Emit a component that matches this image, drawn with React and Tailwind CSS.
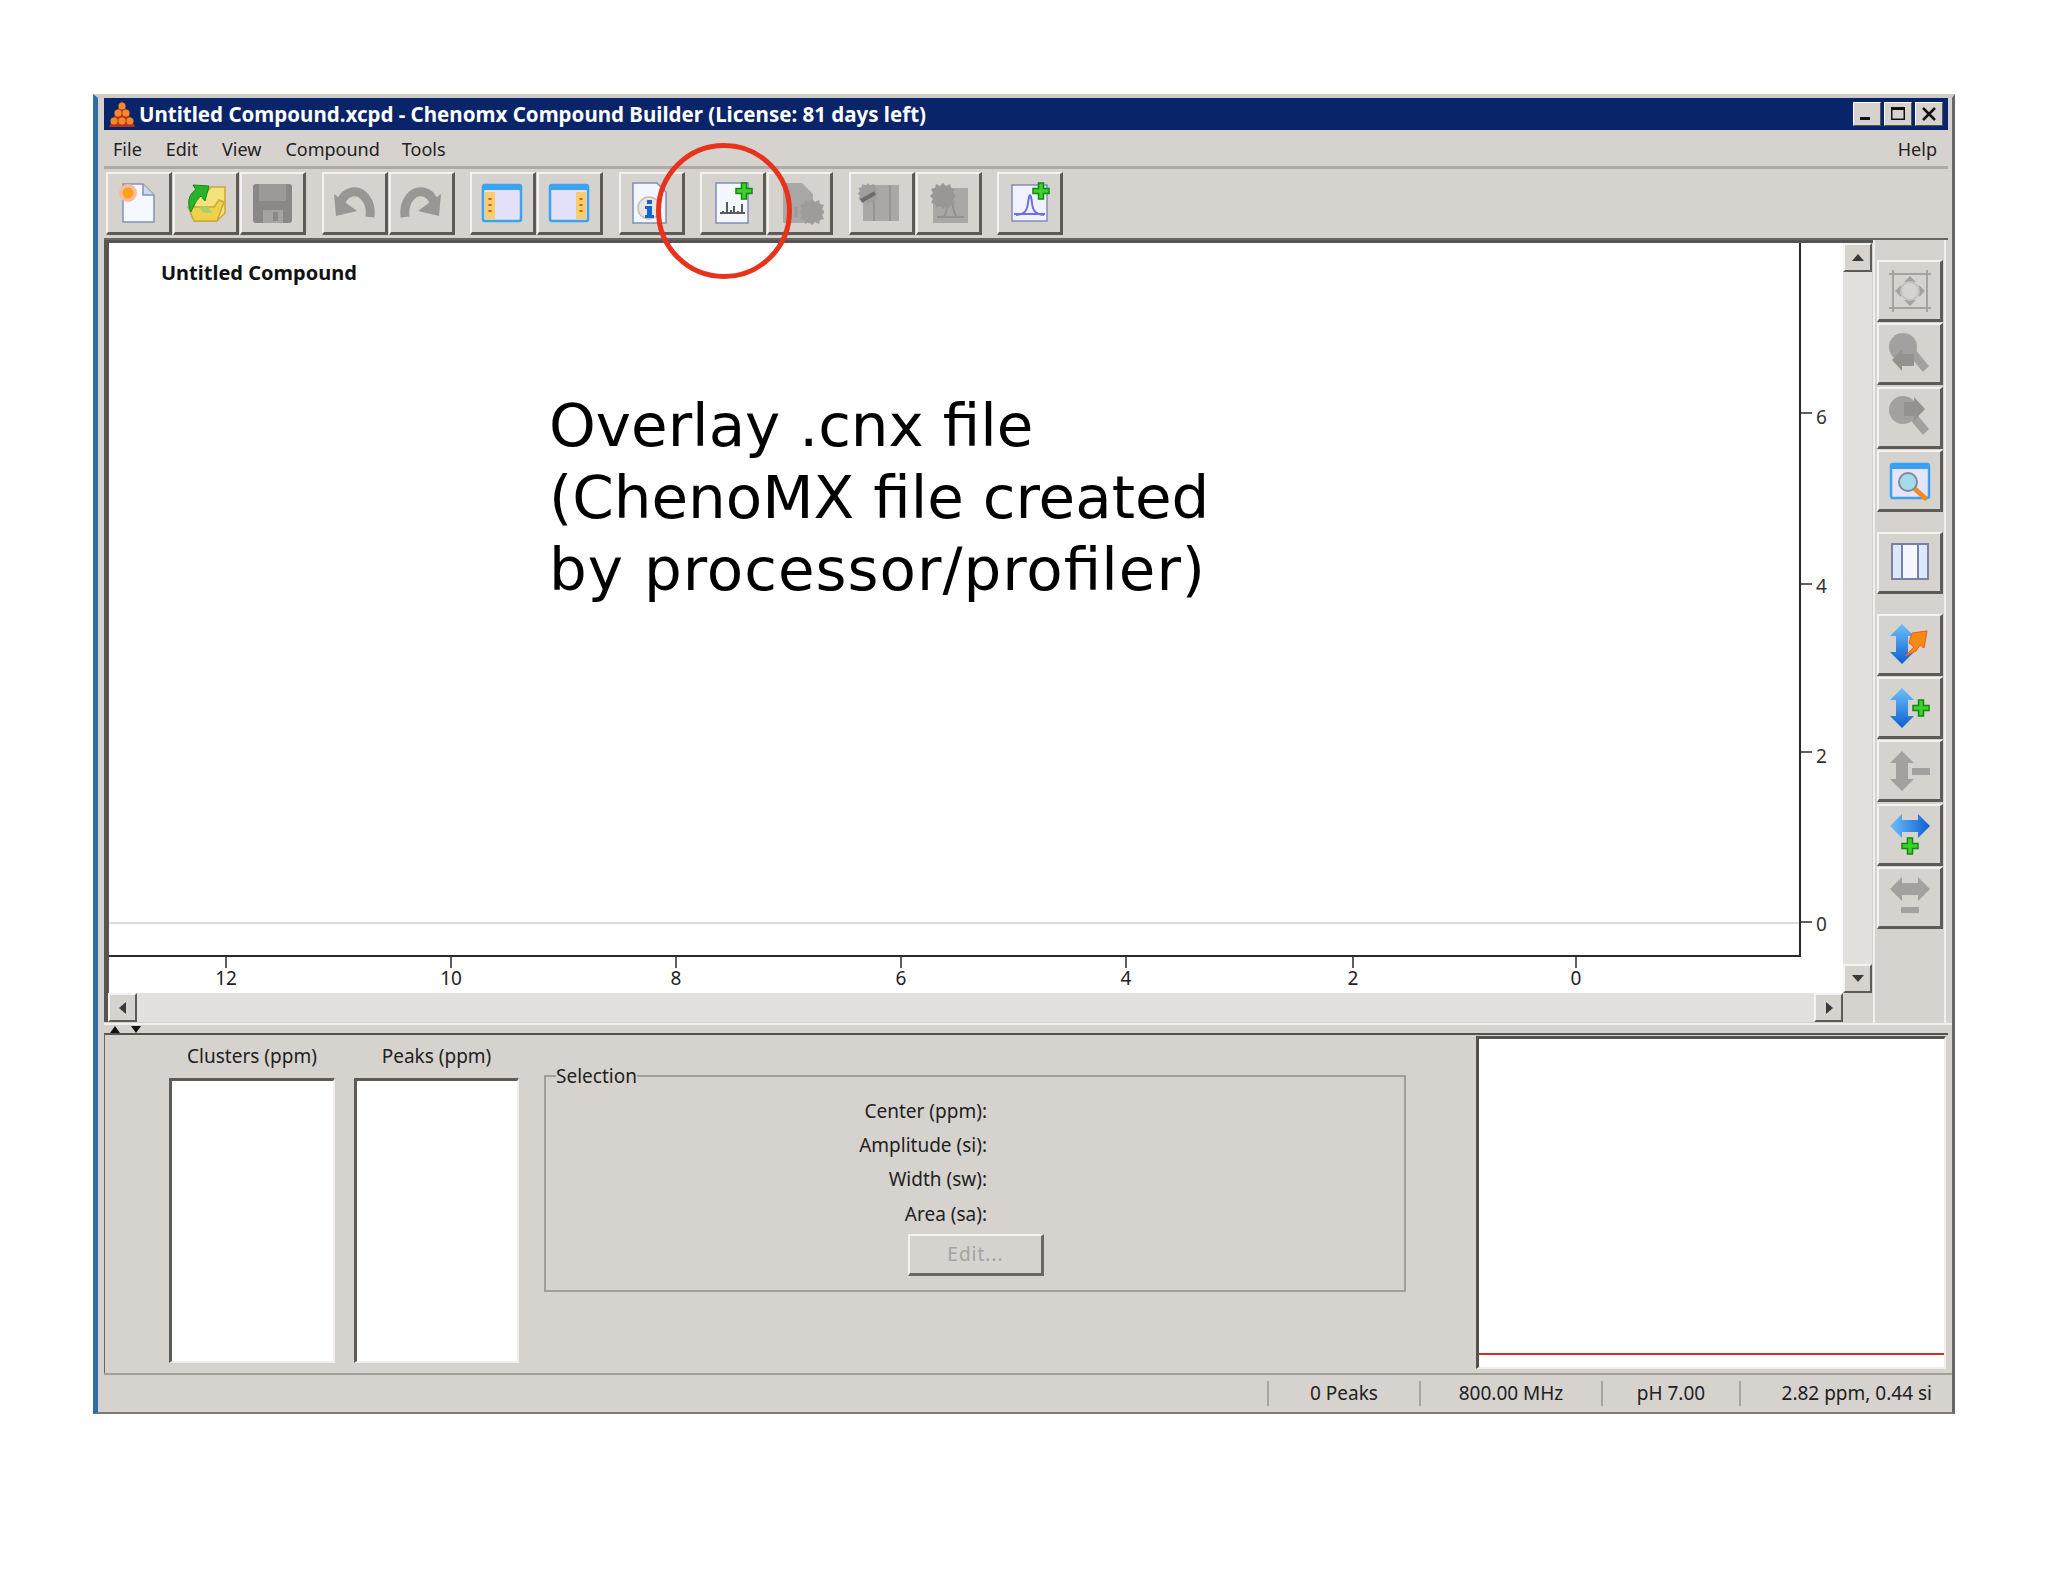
import React from 'react';

const Plus = ({ x, y }) => (
  <path
    d={`M${x - 2.5} ${y - 8}h5v5.5h5.5v5h-5.5v5.5h-5v-5.5h-5.5v-5h5.5z`}
    fill="#3fd02c"
    stroke="#0f8a12"
    strokeWidth="1.5"
  />
);

const Icon = ({ children }) => (
  <svg width="48" height="48" viewBox="0 0 48 48" className="block">
    {children}
  </svg>
);

const blob = 'M0 -11l3 3 4 -2 1 4 4 1 -2 4 3 3 -3 3 2 4 -4 1 -1 4 -4 -2 -3 3 -3 -3 -4 2 -1 -4 -4 -1 2 -4 -3 -3 3 -3 -2 -4 4 -1 1 -4 4 2z';

const icons = {
  newDoc: (
    <Icon>
      <path d="M8 5h20l11 11v27H8z" fill="#f6f8ff" stroke="#8393b8" strokeWidth="1.5" />
      <path d="M28 5v11h11" fill="#cdd8ee" stroke="#8393b8" strokeWidth="1.5" />
      <circle cx="13" cy="14" r="9" fill="#fbb9a0" />
      <circle cx="13" cy="14" r="5.5" fill="#f9a31a" />
    </Icon>
  ),
  open: (
    <Icon>
      <path d="M12 12h14l3 -4h14v26l-8 8H13z" fill="#f6e27a" stroke="#c8a83a" strokeWidth="1.5" />
      <path d="M6 28h26l5 -7 5 2-7 19H12z" fill="#efd24a" stroke="#c8a83a" strokeWidth="1.5" />
      <path d="M9 33C5 25 6 15 14 11l-3 -5 16 1-4 15-4 -5c-4 3 -7 9 -10 16z" fill="#29b32c" stroke="#118a1a" strokeWidth="1" />
      <path d="M17 28h10l3 6H21z" fill="#a9d26a" />
    </Icon>
  ),
  save: (
    <Icon>
      <rect x="4" y="5" width="39" height="39" rx="3" fill="#8a8886" />
      <rect x="10" y="5" width="27" height="17" fill="#9c9a98" />
      <rect x="14" y="31" width="20" height="13" fill="#a5a3a1" />
      <rect x="24" y="33" width="5" height="9" fill="#8a8886" />
    </Icon>
  ),
  undo: (
    <Icon>
      <path d="M40 38C42 22 32 11 22 13 16 14 13 18 11 23" fill="none" stroke="#999795" strokeWidth="9" />
      <polygon points="4,15 6,37 27,32" fill="#999795" />
    </Icon>
  ),
  redo: (
    <Icon>
      <path d="M8 38C6 22 16 11 26 13 32 14 35 18 37 23" fill="none" stroke="#999795" strokeWidth="9" />
      <polygon points="44,15 42,37 21,32" fill="#999795" />
    </Icon>
  ),
  layoutLeft: (
    <Icon>
      <rect x="4" y="6" width="38" height="36" rx="2" fill="#e4e2fb" stroke="#3ba3f2" strokeWidth="2.5" />
      <rect x="4" y="6" width="38" height="5" fill="#3ba3f2" />
      <rect x="6" y="13" width="10" height="27" fill="#f6cf6a" />
      <path d="M11 19v2M11 25v2M11 31v2" stroke="#e2502a" strokeWidth="3" />
    </Icon>
  ),
  layoutRight: (
    <Icon>
      <rect x="4" y="6" width="38" height="36" rx="2" fill="#e4e2fb" stroke="#3ba3f2" strokeWidth="2.5" />
      <rect x="4" y="6" width="38" height="5" fill="#3ba3f2" />
      <rect x="30" y="13" width="10" height="27" fill="#f6cf6a" />
      <path d="M35 19v2M35 25v2M35 31v2" stroke="#e2502a" strokeWidth="3" />
    </Icon>
  ),
  info: (
    <Icon>
      <path d="M6 4h24l9 9v31H6z" fill="#f3f6ff" stroke="#7e8fb8" strokeWidth="1.5" />
      <circle cx="22" cy="29" r="11" fill="#e8e4e0" stroke="#c6bfb8" strokeWidth="1.5" />
      <rect x="20" y="21" width="5" height="4" fill="#1463d8" />
      <path d="M18 27h7v9h2v3H18v-3h2v-6h-2z" fill="#1463d8" />
    </Icon>
  ),
  addSpectrum: (
    <Icon>
      <rect x="7" y="4" width="32" height="40" fill="#f5f7ff" stroke="#7e8fb8" strokeWidth="1.5" />
      <path d="M11 34h25M14 34v-2M18 34v-11M22 34v-3M25 34v-7M29 34v-2M33 34v-9" stroke="#5a5a5a" strokeWidth="2" fill="none" />
      <Plus x={35} y={12} />
    </Icon>
  ),
  removeSpectrum: (
    <Icon>
      <path d="M7 4h19l11 11v29H7z" fill="#aaa8a6" />
      <g transform="translate(36 31)">
        <path d={blob} fill="#9e9c9a" />
      </g>
      <path d="M13 38V24M20 38V28" stroke="#9a9896" strokeWidth="3" />
    </Icon>
  ),
  splitCluster: (
    <Icon>
      <rect x="6" y="6" width="36" height="36" fill="#aaa8a6" />
      <path d="M17 6v36M33 6v36" stroke="#969492" strokeWidth="2" />
      <g transform="translate(11 13) scale(.8)">
        <path d={blob} fill="#a09e9c" />
      </g>
      <path d="M4 22l14 -8" stroke="#6e6c6a" strokeWidth="4" />
    </Icon>
  ),
  peakCluster: (
    <Icon>
      <rect x="9" y="9" width="35" height="35" fill="#aaa8a6" />
      <path d="M13 38h27M19 38c5 -1 5 -24 7 -24s2 23 8 24" stroke="#949290" strokeWidth="2" fill="none" />
      <g transform="translate(19 15)">
        <path d={blob} fill="#999795" />
      </g>
    </Icon>
  ),
  addPeak: (
    <Icon>
      <rect x="6" y="6" width="35" height="36" fill="#f0f3ff" stroke="#7e8fb8" strokeWidth="1.5" />
      <path d="M8 35h31M10 36c9 -1 11 -4 12 -12 .5 -5 1.500 -8 2 -8s1.500 3 2 8c1 8 3 11 12 12" stroke="#6f6cf0" strokeWidth="2" fill="none" />
      <Plus x={35} y={12} />
    </Icon>
  ),
  fit: (
    <Icon>
      <path d="M3 7h42M3 41h42M7 3v42M41 3v42" stroke="#a5a3a1" strokeWidth="2" />
      <path d="M18 15l6 -6 6 6zM18 33l6 6 6 -6zM15 18l-6 6 6 6zM33 18l6 6-6 6z" fill="#a5a3a1" />
      <circle cx="24" cy="24" r="9" fill="none" stroke="#c2c0be" strokeWidth="2" />
    </Icon>
  ),
  zoomBack: (
    <Icon>
      <circle cx="17" cy="17" r="14" fill="#a3a19f" />
      <path d="M22 24l6 -6 15 18-6 6z" fill="#a3a19f" />
      <path d="M6 30l10 -11v5h12v12H16v5z" fill="#949290" />
    </Icon>
  ),
  zoomForward: (
    <Icon>
      <circle cx="17" cy="17" r="14" fill="#a3a19f" />
      <path d="M22 24l6 -6 15 18-6 6z" fill="#a3a19f" />
      <path d="M39 16L28 4v5H18v14h10v5z" fill="#949290" />
    </Icon>
  ),
  zoomWindow: (
    <Icon>
      <rect x="5" y="8" width="38" height="34" rx="2" fill="#e6e4fb" stroke="#37a2f5" strokeWidth="2.5" />
      <rect x="5" y="8" width="38" height="5" fill="#37a2f5" />
      <path d="M29 33l10 9" stroke="#f08a24" strokeWidth="5" strokeLinecap="round" />
      <circle cx="22" cy="26" r="9" fill="#a6dcea" stroke="#7c8c98" strokeWidth="2" />
    </Icon>
  ),
  columns: (
    <Icon>
      <rect x="6" y="6" width="36" height="35" fill="#f4f7fe" stroke="#7a80a4" strokeWidth="2" />
      <rect x="7" y="7" width="8" height="33" fill="#dbe9fb" />
      <rect x="33" y="7" width="8" height="33" fill="#dbe9fb" />
      <path d="M16 6v35M32 6v35" stroke="#7a80a4" strokeWidth="2" />
    </Icon>
  ),
  vAuto: (
    <Icon>
      <defs>
        <linearGradient id="vBlue1" x1="0" y1="0" x2="0" y2="1">
          <stop offset="0" stopColor="#6cc0fa" />
          <stop offset="1" stopColor="#0d5fd2" />
        </linearGradient>
      </defs>
      <path d="M16 4l12 12h-6v16h6L16 44 4 32h6V16H4z" fill="url(#vBlue1)" />
      <path d="M26 13l15 -2-3 17-4 -3-4 6-11 5 9 -9-5 -4z" fill="#f78a17" stroke="#f45a1c" strokeWidth="1" />
    </Icon>
  ),
  vPlus: (
    <Icon>
      <defs>
        <linearGradient id="vBlue2" x1="0" y1="0" x2="0" y2="1">
          <stop offset="0" stopColor="#6cc0fa" />
          <stop offset="1" stopColor="#0d5fd2" />
        </linearGradient>
      </defs>
      <path d="M16 4l12 12h-6v16h6L16 44 4 32h6V16H4z" fill="url(#vBlue2)" />
      <Plus x={35} y={24} />
    </Icon>
  ),
  vMinus: (
    <Icon>
      <path d="M16 4l12 12h-6v16h6L16 44 4 32h6V16H4z" fill="#a3a19f" />
      <rect x="26" y="21" width="18" height="7" fill="#a3a19f" />
    </Icon>
  ),
  hPlus: (
    <Icon>
      <defs>
        <linearGradient id="hBlue" x1="0" y1="0" x2="1" y2="0">
          <stop offset="0" stopColor="#6cc0fa" />
          <stop offset="1" stopColor="#0d5fd2" />
        </linearGradient>
      </defs>
      <path d="M4 16L16 4v6h16V4l12 12-12 12v-6H16v6z" fill="url(#hBlue)" />
      <Plus x={24} y={36} />
    </Icon>
  ),
  hMinus: (
    <Icon>
      <path d="M4 16L16 4v6h16V4l12 12-12 12v-6H16v6z" fill="#a3a19f" />
      <rect x="15" y="34" width="18" height="6" fill="#a3a19f" />
    </Icon>
  ),
};

const ToolButton = ({ icon, h = 'h-[62px]' }) => (
  <div className={`w-[66px] ${h} flex items-center justify-center bg-[#d6d2ce] border-t-2 border-l-2 border-t-[#f4f3f1] border-l-[#f4f3f1] border-r-[3px] border-b-[3px] border-r-[#5e5a56] border-b-[#5e5a56]`}>
    {icons[icon]}
  </div>
);

const ScrollButton = ({ dir }) => {
  const points = { up: '4,13 16,13 10,6', down: '4,6 16,6 10,13', left: '13,4 13,16 6,10', right: '7,4 7,16 14,10' };
  return (
    <div className="w-[29px] h-[29px] shrink-0 flex items-center justify-center bg-[#d6d2ce] border-t-2 border-l-2 border-t-[#f4f3f1] border-l-[#f4f3f1] border-r-2 border-b-2 border-r-[#5e5a56] border-b-[#5e5a56]">
      <svg width="20" height="20" viewBox="0 0 20 20">
        <polygon points={points[dir]} fill="#3c3a38" />
      </svg>
    </div>
  );
};

const toolbarGroups = [
  ['newDoc', 'open', 'save'],
  ['undo', 'redo'],
  ['layoutLeft', 'layoutRight'],
  ['info'],
  ['addSpectrum', 'removeSpectrum'],
  ['splitCluster', 'peakCluster'],
  ['addPeak'],
];

const sideGroups = [
  ['fit', 'zoomBack', 'zoomForward', 'zoomWindow'],
  ['columns'],
  ['vAuto', 'vPlus', 'vMinus', 'hPlus', 'hMinus'],
];

const xTicks = [
  [118, '12'],
  [343, '10'],
  [568, '8'],
  [793, '6'],
  [1018, '4'],
  [1245, '2'],
  [1468, '0'],
];

const yTicks = [
  [170, '6', 11],
  [341, '4', 9],
  [509, '2', 11],
  [679, '0', 9],
];

const Chart = () => (
  <svg width="1734" height="750" viewBox="1 0 1734 750" className="block" fontFamily="'Noto Sans', sans-serif">
    <text x="53" y="37" fontSize="20" fontWeight="700" fill="#111">Untitled Compound</text>
    <line x1="0" x2="1692" y1="680" y2="680" stroke="#cfcfcf" strokeWidth="1.5" />
    <path d="M1692 0V713H0" fill="none" stroke="#2a2a2a" strokeWidth="2" />
    {xTicks.map(([x, label]) => (
      <g key={label}>
        <line x1={x} x2={x} y1="713" y2="725" stroke="#2a2a2a" strokeWidth="1.5" />
        <text x={x} y="742" fontSize="19" textAnchor="middle" fill="#222">{label}</text>
      </g>
    ))}
    {yTicks.map(([y, label, dy]) => (
      <g key={label}>
        <line x1="1692" x2="1704" y1={y} y2={y} stroke="#2a2a2a" strokeWidth="1.5" />
        <text x="1708" y={y + dy} fontSize="19" fill="#333">{label}</text>
      </g>
    ))}
  </svg>
);

const List = ({ title, width }) => (
  <div className={`${width} flex flex-col`}>
    <div className="h-[43px] flex items-center justify-center text-[19px] text-[#222]">{title}</div>
    <div className="h-[285px] bg-white border-t-[3px] border-l-[3px] border-t-[#5e5a56] border-l-[#5e5a56] border-r-2 border-b-2 border-r-[#efeeec] border-b-[#efeeec]" />
  </div>
);

const selectionRows = ['Center (ppm):', 'Amplitude (si):', 'Width (sw):', 'Area (sa):'];

const statusCells = [
  ['w-[152px]', 'justify-center', '0 Peaks'],
  ['w-[182px]', 'justify-center', '800.00 MHz'],
  ['w-[138px]', 'justify-center', 'pH 7.00'],
  ['w-[213px]', 'justify-end pr-[20px]', '2.82 ppm, 0.44 si'],
];

export default function App() {
  return (
    <div className="relative w-[2048px] h-[1582px] bg-white pt-[94px] pl-[93px] font-['Noto_Sans',sans-serif]">
      <div className="w-[1862px] h-[1320px] flex flex-col bg-[#d6d2ce] border-l-[5px] border-l-[#2f6ea5] border-t-4 border-t-[#cfccc8] border-r-[3px] border-r-[#6a6662] border-b-2 border-b-[#7c7874]">
        {/* title bar */}
        <div className="ml-[6px] mr-[4px] h-[32px] shrink-0 bg-[#0a246a] flex items-center pl-[4px] pr-[5px] text-white">
          <svg width="28" height="28" viewBox="0 0 28 28" className="shrink-0">
            <path d="M14 1L27 27H1z" fill="#b8341c" />
            {[[14, 6], [10, 13], [18, 13], [6, 21], [14, 21], [22, 21]].map(([cx, cy]) => (
              <circle key={`${cx}-${cy}`} cx={cx} cy={cy} r="3.6" fill="#f58a2a" />
            ))}
          </svg>
          <span className="ml-[3px] text-[20.500px] font-bold whitespace-nowrap">Untitled Compound.xcpd - Chenomx Compound Builder (License: 81 days left)</span>
          <div className="ml-auto flex items-center gap-[3px]">
            {['min', 'max', 'close'].map((b) => (
              <div key={b} className="w-[28px] h-[24px] flex items-center justify-center bg-[#d6d2ce] border-t border-l border-t-white border-l-white border-r border-b border-r-[#555] border-b-[#555]">
                <svg width="20" height="18" viewBox="0 0 20 18">
                  {b === 'min' && <rect x="3" y="12" width="10" height="3" fill="#111" />}
                  {b === 'max' && <path d="M3 2h14v13H3zM4.500 5v8.500h11V5z" fill="#111" fillRule="evenodd" />}
                  {b === 'close' && <path d="M4 3l12 12M16 3L4 15" stroke="#111" strokeWidth="2.5" />}
                </svg>
              </div>
            ))}
          </div>
        </div>

        {/* menu */}
        <div className="ml-[6px] mr-[4px] h-[39px] shrink-0 flex items-center justify-between border-b-[3px] border-b-[#aeaaa6] pt-[2px] pl-[9px] pr-[11px] text-[18px] text-[#222]">
          <div className="flex gap-[24px]">
            <span>File</span>
            <span>Edit</span>
            <span>View</span>
            <span>Compound</span>
            <span className="-ml-[2px]">Tools</span>
          </div>
          <span>Help</span>
        </div>

        {/* toolbar */}
        <div className="ml-[8px] h-[69px] shrink-0 pt-[3px] flex gap-[15.500px]">
          {toolbarGroups.map((group) => (
            <div key={group[0]} className="flex gap-px">
              {group.map((icon) => (
                <ToolButton key={icon} icon={icon} h="h-[63px]" />
              ))}
            </div>
          ))}
        </div>

        {/* spectrum */}
        <div className="ml-[6px] mr-[4px] h-[785px] shrink-0 flex border-t-[2px] border-t-[#6a6662]">
          <div className="w-[1769px] flex flex-col">
            <div className="flex h-[753px] border-t-[3px] border-l-[5px] border-t-[#555] border-l-[#555]">
              <div className="w-[1734px] h-[750px] bg-white">
                <Chart />
              </div>
              <div className="w-[29px] flex flex-col bg-[#e3e1de]">
                <ScrollButton dir="up" />
                <div className="flex-1" />
                <ScrollButton dir="down" />
              </div>
            </div>
            <div className="flex h-[29px] border-l-4 border-l-[#555]">
              <ScrollButton dir="left" />
              <div className="w-[1677px] bg-[#e3e1de]" />
              <ScrollButton dir="right" />
            </div>
          </div>
          <div className="w-[73px] flex flex-col items-start gap-[20px] pl-[2px] pt-[20px] border-l-2 border-l-[#f0efed] border-r-2 border-r-[#f0efed]">
            {sideGroups.map((group) => (
              <div key={group[0]} className="flex flex-col gap-[1.250px]">
                {group.map((icon) => (
                  <ToolButton key={icon} icon={icon} />
                ))}
              </div>
            ))}
          </div>
        </div>

        {/* splitter */}
        <div className="ml-[6px] h-[10px] shrink-0 flex gap-[11px] pl-[6px] items-end border-t-2 border-t-[#f0efed]">
          <svg width="10" height="7" viewBox="0 0 10 7"><polygon points="0,7 10,7 5,0" fill="#111" /></svg>
          <svg width="10" height="7" viewBox="0 0 10 7"><polygon points="0,0 10,0 5,7" fill="#111" /></svg>
        </div>

        {/* bottom panel */}
        <div className="ml-[6px] mr-[4px] h-[340px] shrink-0 flex border-t-2 border-t-[#55514d] border-l-[1px] border-l-[#6a6662] pl-[64px] pr-[2px]">
          <div className="flex gap-[19px]">
            <List title="Clusters (ppm)" width="w-[166px]" />
            <List title="Peaks (ppm)" width="w-[165px]" />
          </div>
          <fieldset className="ml-[25px] mt-[28px] w-[862px] h-[229px] border-2 border-[#a29e9a] px-[10px]">
            <legend className="h-[26px] leading-[26px] text-[19px] text-[#222]">Selection</legend>
            <div className="flex flex-col items-end w-[431px] pt-[5px]">
              {selectionRows.map((row) => (
                <div key={row} className="h-[34.300px] flex items-center text-[19px] text-[#222]">{row}</div>
              ))}
            </div>
            <div className="ml-[352px] mt-[3px] w-[136px] h-[42px] flex items-center justify-center border-t-2 border-l-2 border-t-[#f4f3f1] border-l-[#f4f3f1] border-r-[3px] border-b-[3px] border-r-[#6a6662] border-b-[#6a6662] text-[19px] tracking-[1px] text-[#a5a3a0]">
              Edit...
            </div>
          </fieldset>
          <div className="ml-auto mt-[1px] w-[470px] h-[333px] flex flex-col justify-end pb-[12px] bg-white border-t-[3px] border-l-[3px] border-t-[#55514d] border-l-[#55514d] border-r-2 border-b-2 border-r-[#efeeec] border-b-[#efeeec]">
            <div className="h-[2px] bg-[#d62a35]" />
          </div>
        </div>

        {/* status bar */}
        <div className="flex-1 flex justify-end items-center ml-[6px] border-t-2 border-t-[#a29e9a] text-[19px] text-[#222]">
          {statusCells.map(([width, align, text]) => (
            <div key={text} className={`${width} h-[25px] flex items-center ${align} border-l-2 border-l-[#a8a4a0]`}>
              {text}
            </div>
          ))}
        </div>
      </div>

      {/* slide annotation */}
      <div className="absolute left-[549px] top-[390px] font-['DejaVu_Sans',sans-serif] text-[59.500px] leading-[72px] text-black whitespace-nowrap">
        <div>Overlay .cnx file</div>
        <div>(ChenoMX file created</div>
        <div>
          <span className="tracking-[1px]">by processor/pro</span>fi<span className="tracking-[1px]">ler)</span>
        </div>
      </div>
      <div className="absolute left-[656px] top-[143px] w-[136px] h-[136px] rounded-full border-[5px] border-[#e8321c]" />
    </div>
  );
}
